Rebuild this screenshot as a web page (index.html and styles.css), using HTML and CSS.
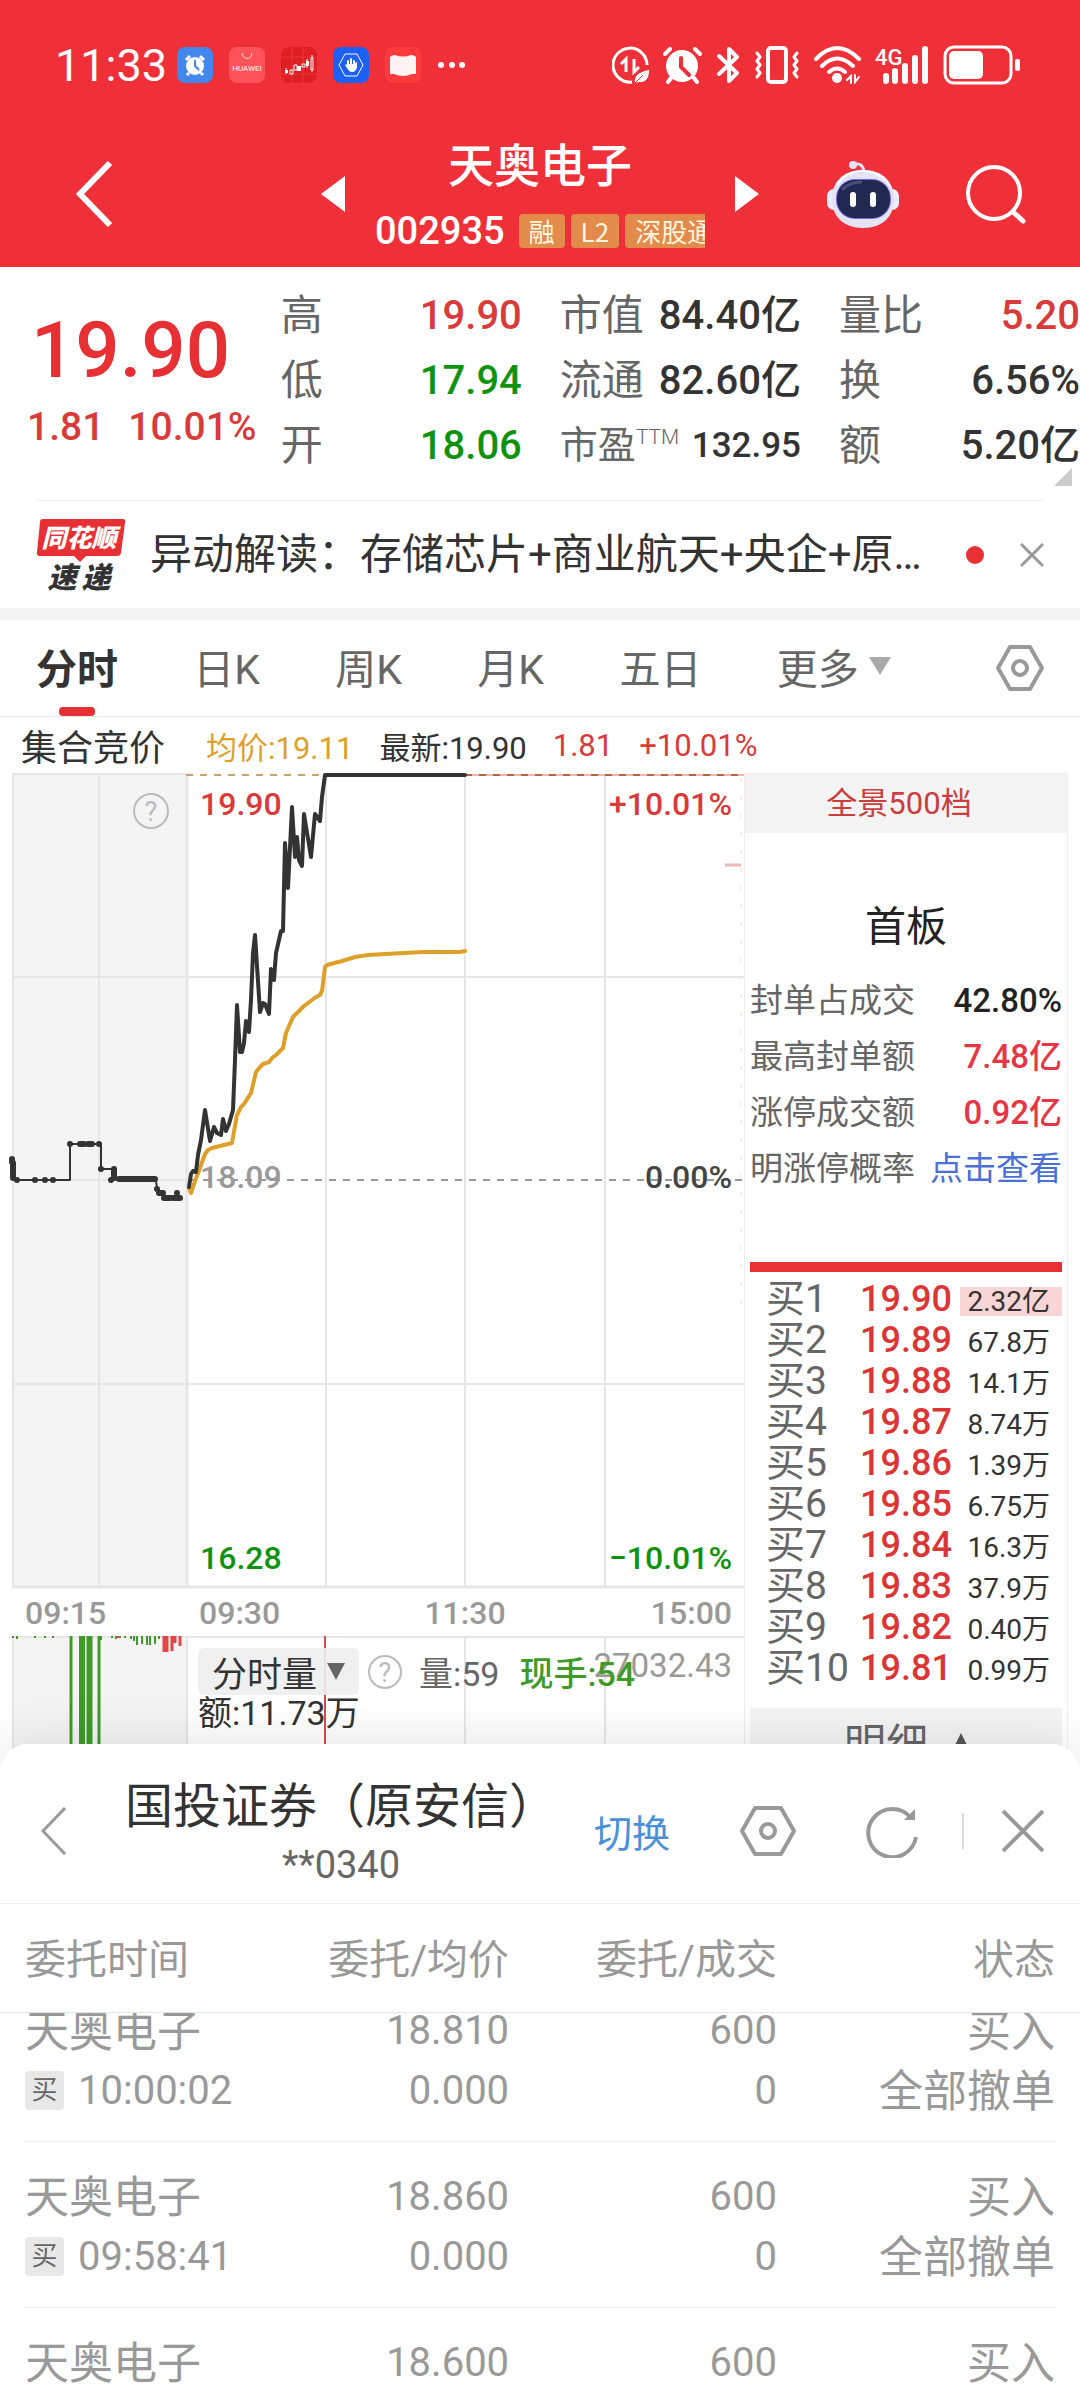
FILE: index.html
```html
<!DOCTYPE html>
<html lang="zh-CN">
<head>
<meta charset="UTF-8">
<meta name="viewport" content="width=device-width">
<title>天奥电子 002935</title>
<link rel="stylesheet" href="styles.css">
</head>
<body>
<header class="top">
    <div class="status">
        <span class="clock">11:33</span>
        <div class="apps">
            <svg width="36" height="36" viewBox="0 0 36 36">
                <rect width="36" height="36" rx="8" fill="#4187ee"/>
                <circle cx="18" cy="19" r="9" fill="#fff"/>
                <path d="M9 13l4-4M27 13l-4-4M12 26l-2 2M24 26l2 2" stroke="#fff" stroke-width="3"/>
                <path d="M18 13v6l4 4" stroke="#4187ee" stroke-width="2" fill="none"/>
            </svg>
            <svg width="36" height="36" viewBox="0 0 36 36">
                <rect width="36" height="36" rx="8" fill="#ff5259"/>
                <path d="M13 6a5 5.500 0 0 0 10 0" stroke="#ffd9da" stroke-width="1" fill="none"/>
                <text x="18" y="24" text-anchor="middle" class="huawei">HUAWEI</text>
            </svg>
            <svg width="36" height="36" viewBox="0 0 36 36">
                <rect width="36" height="36" rx="8" fill="#e01f25"/>
                <path d="M11 0v36M22 0v36M0 10h36M0 27h36" stroke="#e8363b" stroke-width="1"/>
                <path d="M4 23h3v3h-3zM16 19h4v5h-4zM25 14h3v5h-3z" fill="#fff"/>
                <path d="M9 23h3v4h-3zM13 18h3v5h-3zM21 17h3v3h-3zM30 11h2v12h-2zM31 8v3M31 23v2M5 21v6M26 12v9" stroke="#fff" stroke-width="1" fill="none"/>
            </svg>
            <svg width="36" height="36" viewBox="0 0 36 36">
                <rect width="36" height="36" rx="8" fill="#1d60f6"/>
                <path d="M12 7h12l6 11-6 11H12L6 18z" stroke="#fff" stroke-width="1" fill="none"/>
                <path d="M15 19v-5M18 19v-7M21 19v-5" stroke="#fff" stroke-width="2" stroke-linecap="round"/>
                <path d="M14 17h8l1-2h1v5q-1 5-5 5-3 0-5-4l-2-3 1-1 2 2z" fill="#fff"/>
            </svg>
            <svg width="36" height="36" viewBox="0 0 36 36">
                <rect width="36" height="36" rx="8" fill="#ff3a3c"/>
                <path d="M5 10q2-2 5-2 8 3 16 0 3 0 5 2v17h-4q-9 4-18 0H5z" fill="#fff4f1"/>
            </svg>
            <svg width="28" height="8" viewBox="0 0 28 8" fill="#fff"><circle cx="4" cy="4" r="3"/><circle cx="15" cy="4" r="3"/><circle cx="25" cy="4" r="3"/></svg>
        </div>
        <div class="signals">
            <svg width="37" height="38" viewBox="0 0 37 38" fill="none" stroke="#fff">
                <path d="M20 36A17 17 0 1 1 35 19" stroke-width="3"/>
                <path d="M9 18l5-5v13M27 21l-5 5V13" stroke-width="3"/>
                <path d="M23 37q-2-10 14-13 0 13-10 12z" fill="#fff" stroke="none"/>
                <path d="M22 38l9-9" stroke="#f03038" stroke-width="1"/>
            </svg>
            <svg width="39" height="38" viewBox="0 0 39 38" fill="none" stroke="#fff" stroke-linecap="round">
                <circle cx="19" cy="20" r="16" fill="#fff" stroke="none"/>
                <path d="M2 8l5-5M37 8l-5-5M8 32l-3 4M31 32l3 4" stroke-width="4"/>
                <path d="M18 12v9l8 8" stroke="#f03038" stroke-width="4"/>
            </svg>
            <svg width="24" height="38" viewBox="0 0 24 38" fill="none" stroke="#fff" stroke-width="4" stroke-linejoin="round" stroke-linecap="round"><path d="M3 10l18 17-8 8V3l8 8L3 28"/></svg>
            <svg width="46" height="38" viewBox="0 0 46 38" fill="none" stroke="#fff" stroke-width="4" stroke-linejoin="round" stroke-linecap="round">
                <rect x="14" y="2" width="18" height="34" rx="3"/>
                <path stroke-width="3" d="M3 7l3 4-3 4 3 4-3 4 3 4-3 4M43 7l-3 4 3 4-3 4 3 4-3 4 3 4"/>
            </svg>
            <svg width="47" height="38" viewBox="0 0 47 38" fill="none" stroke="#fff" stroke-width="4" stroke-linecap="round">
                <path d="M2 13q21-22 43 0M8 20q15-15 31 0M15 26q8-7 16 0"/>
                <circle cx="23" cy="32" r="5" fill="#fff" stroke="none"/>
                <path d="M33 34l4-4v7M45 31l-4 5v-7" stroke-width="2"/>
            </svg>
            <svg width="54" height="38" viewBox="0 0 54 38" stroke="#fff" stroke-width="6" stroke-linecap="round">
                <path d="M11 30v5M20 25v10M30 20v15M40 12v23M50 3v32"/>
                <text x="0" y="19" class="net" stroke="none">4G</text>
            </svg>
            <svg width="78" height="40" viewBox="0 0 78 40">
                <rect x="2" y="2" width="66" height="36" rx="9" fill="none" stroke="#fff" stroke-width="3"/>
                <rect x="6" y="6" width="34" height="28" rx="5" fill="#fff"/>
                <rect x="72" y="14" width="5" height="12" rx="2" fill="#fff"/>
            </svg>
        </div>
    </div>
    <nav class="nav">
        <div class="nav-left">
            <button class="icon" aria-label="返回"><svg width="37" height="66" viewBox="0 0 37 66"><path d="M34 2L4 33l30 31" fill="none" stroke="#fff" stroke-width="6"/></svg></button>
            <button class="icon" aria-label="上一只"><svg width="24" height="38" viewBox="0 0 24 38"><path d="M24 1v36L0 19z" fill="#fff"/></svg></button>
        </div>
        <div class="nav-title">
            <h1>天奥电子</h1>
            <p><span class="code">002935</span><span class="tag">融</span><span class="tag">L2</span><span class="tag">深股通</span></p>
        </div>
        <div class="nav-right">
            <button class="icon" aria-label="下一只"><svg width="24" height="38" viewBox="0 0 24 38"><path d="M0 1v36l24-18z" fill="#fff"/></svg></button>
            <button class="icon" aria-label="智能助手">
                <svg width="72" height="68" viewBox="0 0 72 68">
                    <path d="M26 4q10-2 11 8" fill="none" stroke="#e3e1fa" stroke-width="3"/>
                    <circle cx="26" cy="5" r="4" fill="#e6e2f8"/>
                    <rect x="0" y="29" width="72" height="21" rx="7" fill="#e9edff"/>
                    <path d="M36 10c20 0 31 12 31 29S56 68 36 68 5 56 5 39s11-29 31-29z" fill="#e4e4f7"/>
                    <path d="M10 25q9-14 26-14t26 14" fill="none" stroke="#fff" stroke-width="2"/>
                    <rect x="9" y="19" width="55" height="40" rx="19" fill="#7a62e6"/>
                    <rect x="10" y="20" width="53" height="38" rx="18" fill="#202950"/>
                    <path d="M16 29q7-7 18-7" fill="none" stroke="#47517a" stroke-width="3" stroke-linecap="round"/>
                    <rect x="23" y="32" width="6" height="15" rx="3" fill="#fff"/>
                    <rect x="43" y="32" width="6" height="15" rx="3" fill="#fff"/>
                </svg>
            </button>
            <button class="icon" aria-label="搜索"><svg width="60" height="60" viewBox="0 0 60 60" fill="none" stroke="#fff" stroke-width="4"><circle cx="28" cy="29" r="26"/><path d="M47 48l10 9" stroke-width="5" stroke-linecap="round"/></svg></button>
        </div>
    </nav>
</header>

<main class="main">
    <section class="quote">
        <div class="price">
            <strong>19.90</strong>
            <p><span>1.81</span><span>10.01%</span></p>
        </div>
        <dl class="stats">
            <div><dt>高</dt><dd class="up">19.90</dd></div>
            <div><dt>市值</dt><dd>84.40亿</dd></div>
            <div><dt>量比</dt><dd class="up">5.20</dd></div>
            <div><dt>低</dt><dd class="down">17.94</dd></div>
            <div><dt>流通</dt><dd>82.60亿</dd></div>
            <div><dt>换</dt><dd>6.56%</dd></div>
            <div><dt>开</dt><dd class="down">18.06</dd></div>
            <div class="small"><dt>市盈<sup>TTM</sup></dt><dd>132.95</dd></div>
            <div><dt>额</dt><dd>5.20亿</dd></div>
        </dl>
        <i class="corner"></i>
    </section>

    <section class="news">
        <svg width="90" height="76" viewBox="0 0 90 76">
            <path d="M7 2h80q3 0 2 4l-4 30q-1 3-4 3H50l-6 6-6-6H4q-4 0-3-4L4 5q0-3 3-3z" fill="#e63033"/>
            <text x="43" y="30" text-anchor="middle" class="logo-a">同花顺</text>
            <text x="26" y="71" text-anchor="middle" class="logo-b">速</text>
            <text x="60" y="71" text-anchor="middle" class="logo-b">递</text>
        </svg>
        <a href="#">异动解读：存储芯片+商业航天+央企+原材料国产替代</a>
        <i class="dot"></i>
        <button class="icon" aria-label="关闭"><svg width="24" height="24" viewBox="0 0 24 24"><path d="M1 1l22 22M23 1L1 23" stroke="#999" stroke-width="3"/></svg></button>
    </section>

    <div class="tabs">
        <button class="active">分时</button>
        <button>日K</button>
        <button>周K</button>
        <button>月K</button>
        <button>五日</button>
        <button>更多<svg width="22" height="18" viewBox="0 0 22 18"><path d="M0 0h22L11 18z" fill="#aaa"/></svg></button>
        <button class="icon set" aria-label="设置"><svg width="48" height="48" viewBox="0 0 48 48" fill="none" stroke="#999" stroke-width="4" stroke-linejoin="round"><path d="M14 3h20l12 21-12 21H14L2 24z"/><circle cx="24" cy="24" r="7"/></svg></button>
    </div>

    <p class="ticker">
        <span class="auction">集合竞价</span>
        <span class="avg">均价:19.11</span>
        <span>最新:19.90</span>
        <span class="up">1.81</span>
        <span class="up">+10.01%</span>
    </p>

    <div class="board">
        <div class="chart">
            <svg class="line" viewBox="0 773 744 863">
                <rect x="12" y="774" width="175" height="813" fill="#f4f4f4"/>
                <path class="grid" d="M13 774v813M99 774v813M187 774v813M326 774v813M465 774v813M605 774v813M12 977h732M12 1180h177M12 1384h732M12 1587h732M12 774h176"/>
                <path class="grid thick" d="M187 774v813M12 1587h732"/>
                <path d="M186 775h139" class="dash tan"/>
                <path d="M465 775h279" stroke="#f0b4ae" stroke-width="2"/>
                <path d="M465 775h279" class="dash rust"/>
                <path d="M189 1180h555" class="dash zero"/>
                <path d="M741 778v535" class="faint"/>
                <path d="M725 865h16" stroke="#f0b9b9" stroke-width="3"/>
                <circle cx="151" cy="811" r="17" class="ring"/>
                <text x="151" y="821" text-anchor="middle" class="mark">?</text>
                <text x="200" y="815" class="up">19.90</text>
                <text x="732" y="815" class="up" text-anchor="end">+10.01%</text>
                <text x="200" y="1188" class="mute">18.09</text>
                <text x="732" y="1188" class="mid" text-anchor="end">0.00%</text>
                <text x="200" y="1569" class="down">16.28</text>
                <text x="732" y="1569" class="down" text-anchor="end">−10.01%</text>
                <g class="mute">
                    <text x="25" y="1624">09:15</text>
                    <text x="199" y="1624">09:30</text>
                    <text x="465" y="1624" text-anchor="middle">11:30</text>
                    <text x="732" y="1624" text-anchor="end">15:00</text>
                </g>
                <polyline class="p-auction" points="12,1159 13,1178 17,1180 70,1180 70,1144 101,1144 101,1169 114,1169 114,1178 119,1180 156,1180 157,1189 163,1193 163,1198 177,1198 177,1193 180,1198"/>
                <path class="p-dots" d="M12 1159v3M13 1163v15M17 1180h0M35 1180h0M45 1180h0M53 1180h0M70 1144h0M80 1144h4M88 1144h4M99 1144h0M101 1169h0M114 1169v9M111 1180h0M119 1179h36M157 1189h0M159 1193h4M164 1198h6M173 1198h7M177 1193h0"/>
                <polyline class="p-avg" points="189,1188 191,1193 195,1181 200,1168 205,1154 208,1150 212,1148 232,1143 233,1137 237,1115 241,1107 244,1104 251,1093 256,1072 260,1067 263,1064 269,1062 272,1058 276,1055 283,1048 286,1033 293,1017 304,1006 316,997 320,995 322,991 325,967 327,965 342,961 355,957 368,955 385,954 423,952 460,952 465,951"/>
                <polyline class="p-now" points="189,1187 191,1174 193,1171 196,1172 198,1155 201,1140 205,1110 210,1141 214,1127 217,1133 221,1135 223,1119 226,1131 229,1124 233,1110 235,1060 237,1005 240,1052 242,1052 244,1043 246,1021 249,1032 251,1000 253,953 255,935 260,1012 263,1003 265,1004 269,1014 271,969 274,980 276,953 281,931 283,931 285,843 288,888 292,807 295,857 297,837 299,860 302,866 304,814 311,857 315,814 320,821 322,797 325,775 465,775"/>
            </svg>
            <div class="volume">
                <svg class="bars" viewBox="0 1636 744 136">
                    <rect x="12" y="1636" width="175" height="136" fill="#f4f4f4"/>
                    <path class="grid" d="M13 1636v136M187 1636v136M465 1636v136M605 1636v136M12 1637h732"/>
                    <path d="M325 1636v136" stroke="#d84a4a" stroke-width="2"/>
                    <g fill="none" stroke="#3f9a28">
                        <path d="M71 1636v136M99 1636v136M88 1636v136M91 1636v136" stroke-width="3"/>
                        <path d="M82 1636v136" stroke-width="6"/>
                        <path d="M13 1636v2M17 1636v3M35 1636v2M45 1636v2M53 1636v2M101 1636v4M112 1636v2M116 1636v3M120 1636v2M125 1636v2M131 1636v3M134 1636v5M137 1636v9M142 1636v8M147 1636v9M150 1636v9M155 1636v8M159 1636v3" stroke-width="2"/>
                    </g>
                    <path d="M118 1636v2M164 1636v16M167 1636v16M172 1636v15M175 1636v7M180 1636v10" stroke="#e04848" stroke-width="3"/>
                </svg>
                <span class="scale">27032.43</span>
                <div class="vol-row">
                    <button class="pick">分时量<svg width="18" height="17" viewBox="0 0 18 17"><path d="M0 0h18L9 17z" fill="#666"/></svg></button>
                    <svg width="36" height="36" viewBox="0 0 36 36"><circle cx="18" cy="18" r="16" class="ring"/><text x="18" y="28" text-anchor="middle" class="mark">?</text></svg>
                    <span class="vol">量:59</span>
                    <span class="hand">现手:54</span>
                </div>
                <p class="amount">额:11.73万</p>
            </div>
        </div>

        <aside class="panel">
            <a class="depth" href="#">全景500档</a>
            <h2>首板</h2>
            <dl class="seal">
                <div><dt>封单占成交</dt><dd>42.80%</dd></div>
                <div><dt>最高封单额</dt><dd class="hot">7.48亿</dd></div>
                <div><dt>涨停成交额</dt><dd class="hot">0.92亿</dd></div>
                <div><dt>明涨停概率</dt><dd><a href="#">点击查看</a></dd></div>
            </dl>
            <table class="bids">
                <tr><th>买1</th><td>19.90</td><td><span class="flash">2.32亿</span></td></tr>
                <tr><th>买2</th><td>19.89</td><td>67.8万</td></tr>
                <tr><th>买3</th><td>19.88</td><td>14.1万</td></tr>
                <tr><th>买4</th><td>19.87</td><td>8.74万</td></tr>
                <tr><th>买5</th><td>19.86</td><td>1.39万</td></tr>
                <tr><th>买6</th><td>19.85</td><td>6.75万</td></tr>
                <tr><th>买7</th><td>19.84</td><td>16.3万</td></tr>
                <tr><th>买8</th><td>19.83</td><td>37.9万</td></tr>
                <tr><th>买9</th><td>19.82</td><td>0.40万</td></tr>
                <tr><th>买10</th><td>19.81</td><td>0.99万</td></tr>
            </table>
            <button class="detail">明细<svg width="14" height="14" viewBox="0 0 14 14"><path d="M0 14h14L7 0z" fill="#555"/></svg></button>
        </aside>
    </div>
</main>

<section class="sheet">
    <div class="broker">
        <button class="icon" aria-label="返回"><svg width="26" height="48" viewBox="0 0 26 48"><path d="M24 1L2 24l22 23" fill="none" stroke="#999" stroke-width="3"/></svg></button>
        <div class="account">
            <h2>国投证券（原安信）</h2>
            <p>**0340</p>
        </div>
        <button class="switch">切换</button>
        <div class="tools">
            <button class="icon" aria-label="设置"><svg width="56" height="52" viewBox="0 0 56 52" fill="none" stroke="#999" stroke-width="4" stroke-linejoin="round"><path d="M15 3h26l13 23-13 23H15L2 26z"/><circle cx="28" cy="26" r="7"/></svg></button>
            <button class="icon refresh" aria-label="刷新"><svg width="52" height="54" viewBox="0 0 52 54" fill="none" stroke="#999" stroke-width="4"><path d="M50 33a24 24 0 1 1-5-19"/><path d="M49 5v11H38z" fill="#999" stroke="none"/></svg></button>
            <i class="bar"></i>
            <button class="icon" aria-label="关闭"><svg width="42" height="42" viewBox="0 0 42 42"><path d="M1 1l40 40M41 1L1 41" stroke="#999" stroke-width="4"/></svg></button>
        </div>
    </div>
    <table class="orders head">
        <tr><th>委托时间</th><th>委托/均价</th><th>委托/成交</th><th>状态</th></tr>
    </table>
    <div class="list">
        <table class="orders">
            <tr>
                <td><p class="cn">天奥电子</p><p><span class="side">买</span>10:00:02</p></td>
                <td><p>18.810</p><p>0.000</p></td>
                <td><p>600</p><p>0</p></td>
                <td><p class="cn">买入</p><p class="cn">全部撤单</p></td>
            </tr>
            <tr>
                <td><p class="cn">天奥电子</p><p><span class="side">买</span>09:58:41</p></td>
                <td><p>18.860</p><p>0.000</p></td>
                <td><p>600</p><p>0</p></td>
                <td><p class="cn">买入</p><p class="cn">全部撤单</p></td>
            </tr>
            <tr>
                <td><p class="cn">天奥电子</p></td>
                <td><p>18.600</p></td>
                <td><p>600</p></td>
                <td><p class="cn">买入</p></td>
            </tr>
        </table>
    </div>
</section>
</body>
</html>
```
FILE: styles.css
```css
* {
    margin: 0;
    padding: 0;
    box-sizing: border-box;
}
body {
    display: flex;
    flex-direction: column;
    height: 100vh;
    overflow: hidden;
    background: #fff;
    color: #333;
    font-family: Roboto, "Noto Sans CJK SC", sans-serif;
    font-size: 32px;
}
button {
    border: 0;
    background: none;
    color: inherit;
    font: inherit;
}
a {
    color: inherit;
    text-decoration: none;
}
svg {
    display: block;
    flex: none;
}
.icon {
    display: block;
    flex: none;
}
.up {
    color: #d93a3a;
    fill: #d93a3a;
}
.down {
    color: #0f930f;
    fill: #0f930f;
}

/* header */
.top {
    flex: none;
    background: #f03038;
    color: #fff;
}
.status {
    display: flex;
    align-items: center;
    height: 130px;
    padding: 0 59px 0 55px;
}
.clock {
    font-size: 45px;
}
.apps {
    display: flex;
    align-items: center;
    gap: 16px;
    margin-left: 10px;
}
.signals {
    display: flex;
    align-items: center;
    gap: 14px;
    margin-left: auto;
}
.huawei {
    font-size: 8px;
    fill: #fff;
}
.net {
    font-size: 22px;
    font-weight: 500;
    fill: #fff;
}
.nav {
    display: grid;
    grid-template-columns: 1fr 330px 1fr;
    column-gap: 30px;
    height: 137px;
}
.nav-left,
.nav-right {
    display: flex;
    align-items: center;
    justify-content: space-between;
    padding-bottom: 10px;
}
.nav-left {
    padding-left: 76px;
}
.nav-right {
    padding-right: 54px;
}
.nav-title {
    padding-top: 8px;
    overflow: hidden;
}
.nav-title h1 {
    font-size: 46px;
    font-weight: 500;
    line-height: 56px;
    text-align: center;
}
.nav-title p {
    display: flex;
    align-items: center;
    gap: 6px;
    margin-top: 18px;
    white-space: nowrap;
}
.code {
    margin-right: 8px;
    font-size: 38px;
    font-weight: 500;
    line-height: 38px;
}
.tag {
    padding: 0 10px;
    border-radius: 4px;
    background: #e38b4b;
    color: #fff6e0;
    font-family: "Noto Sans CJK SC", sans-serif;
    font-size: 26px;
    line-height: 34px;
}

/* quote */
.main {
    flex: 1;
    min-height: 0;
    overflow: hidden;
}
.quote {
    position: relative;
    display: flex;
    height: 233px;
}
.price {
    width: 26%;
    padding: 42px 0 0 27px;
    color: #e63033;
    white-space: nowrap;
}
.price strong {
    display: block;
    padding-left: 4px;
    font-size: 78px;
    font-weight: 500;
    line-height: 84px;
}
.price p {
    display: flex;
    gap: 24px;
    margin-top: 10px;
    font-size: 39px;
    font-weight: 500;
    line-height: 48px;
    color: #d93a3a;
}
.stats {
    display: grid;
    flex: 1;
    grid-template-columns: repeat(3, 1fr);
    grid-auto-rows: 65px;
    column-gap: 38px;
    padding-top: 16px;
}
.stats div {
    display: flex;
    justify-content: space-between;
    line-height: 65px;
    white-space: nowrap;
}
.stats dt {
    font-size: 42px;
    color: #666;
}
.stats dd {
    font-size: 40px;
    font-weight: 500;
}
.stats .small dt {
    font-size: 38px;
}
.stats .small dd {
    font-size: 35px;
}
.stats sup {
    font-size: 21px;
    font-weight: 300;
    line-height: 0;
}
.corner {
    position: absolute;
    right: 8px;
    bottom: 14px;
    border: 9px solid transparent;
    border-right-color: #ccc;
    border-bottom-color: #ccc;
}

/* news */
.news {
    display: flex;
    align-items: center;
    height: 108px;
    margin: 0 36px;
    border-top: 1px solid #eee;
}
.news a {
    flex: 1;
    margin: 0 34px 0 24px;
    overflow: hidden;
    font-size: 42px;
    line-height: 60px;
    text-overflow: ellipsis;
    white-space: nowrap;
}
.dot {
    width: 18px;
    height: 18px;
    margin-right: 36px;
    border-radius: 50%;
    background: #e63033;
}

/* period tabs */
.tabs {
    display: flex;
    align-items: center;
    justify-content: space-between;
    height: 109px;
    padding: 0 36px;
    border-top: 12px solid #f4f4f4;
    border-bottom: 1px solid #e6e6e6;
    color: #666;
}
.tabs button {
    display: flex;
    align-items: center;
    gap: 10px;
    height: 96px;
    padding-bottom: 4px;
    font-size: 41px;
}
.tabs .active {
    position: relative;
    color: #333;
    font-weight: 700;
}
.tabs .active::after {
    content: "";
    position: absolute;
    bottom: 0;
    left: 50%;
    width: 36px;
    height: 9px;
    margin-left: -18px;
    border-radius: 4px;
    background: #e63033;
}
.tabs .set {
    margin-left: 30px;
    padding-bottom: 0;
}
.ticker {
    display: flex;
    align-items: center;
    gap: 26px;
    height: 56px;
    padding-left: 21px;
    font-size: 31px;
}
.auction {
    margin-right: 15px;
    font-size: 36px;
}
.avg {
    color: #dfa02a;
}

/* chart */
.board {
    display: flex;
    align-items: flex-start;
    padding-right: 12px;
}
.chart {
    flex: 1;
    min-width: 0;
}
.line {
    width: 100%;
    font-size: 32px;
    font-weight: 500;
}
.grid {
    fill: none;
    stroke: #e6e6e6;
    stroke-width: 2;
}
.thick {
    stroke-width: 3;
}
.dash {
    stroke-width: 2;
    stroke-dasharray: 7 7;
}
.tan {
    stroke: #c8a370;
}
.rust {
    stroke: #b8683c;
}
.zero {
    stroke: #999;
}
.faint {
    stroke: #f6dcdc;
    stroke-width: 1;
    stroke-dasharray: 4 14;
}
.ring {
    fill: none;
    stroke: #bbb;
    stroke-width: 2;
}
.mark {
    font-size: 27px;
    font-weight: 400;
    fill: #bbb;
}
.mute {
    fill: #999;
}
.mid {
    fill: #444;
}
.p-auction,
.p-now,
.p-avg,
.p-dots {
    fill: none;
    stroke: #333;
    stroke-width: 4;
    stroke-linejoin: round;
    stroke-linecap: round;
}
.p-auction {
    stroke-width: 2;
}
.p-dots {
    stroke-width: 6;
}
.p-avg {
    stroke: #dfa02a;
    stroke-width: 4;
}
.volume {
    position: relative;
    height: 136px;
    padding: 12px 0 0 198px;
    font-size: 34px;
}
.bars {
    position: absolute;
    top: 0;
    left: 0;
    width: 100%;
}
.scale {
    position: absolute;
    top: 10px;
    right: 12px;
    color: #999;
    font-size: 33px;
    line-height: 40px;
}
.vol-row {
    position: relative;
    display: flex;
    align-items: center;
    height: 47px;
}
.pick {
    display: flex;
    align-items: center;
    gap: 10px;
    height: 47px;
    margin-right: 8px;
    padding: 0 14px;
    border-radius: 6px;
    background: rgba(238, 238, 238, .9);
    font-size: 35px;
}
.vol {
    margin-left: 16px;
    color: #666;
}
.hand {
    margin-left: 20px;
    color: #3f9a28;
    font-weight: 500;
}
.amount {
    position: relative;
    line-height: 36px;
}

/* order book */
.panel {
    width: 324px;
    height: 999px;
    padding: 0 5px;
    border: 1px solid #eee;
    border-bottom: 0;
}
.depth {
    display: block;
    margin: 0 -5px;
    padding-right: 14px;
    background: #f4f4f4;
    color: #cc3d3d;
    font-size: 31px;
    line-height: 59px;
    text-align: center;
}
.panel h2 {
    margin: 64px 0 16px;
    font-size: 41px;
    font-weight: 400;
    line-height: 60px;
    text-align: center;
    color: #222;
}
.seal div {
    display: flex;
    justify-content: space-between;
    font-size: 33px;
    line-height: 56px;
    white-space: nowrap;
}
.seal dt {
    color: #666;
}
.seal dd {
    color: #222;
    font-weight: 500;
}
.seal .hot {
    color: #e63545;
}
.seal a {
    font-size: 33px;
    color: #4a70d6;
    font-weight: 400;
}
.bids {
    width: 100%;
    margin-top: 65px;
    border-top: 10px solid #e63033;
    border-collapse: separate;
    border-spacing: 0;
    padding-top: 6px;
}
.bids tr {
    height: 41px;
}
.bids th {
    width: 110px;
    padding-left: 16px;
    color: #666;
    font-size: 39px;
    font-weight: 400;
    line-height: 36px;
    text-align: left;
    vertical-align: middle;
    white-space: nowrap;
}
.bids td {
    color: #dc3535;
    font-size: 36px;
    font-weight: 500;
    line-height: 36px;
    vertical-align: middle;
}
.bids td + td {
    padding: 6px 12px 0 0;
    color: #333;
    font-size: 28px;
    font-weight: 400;
    line-height: 29px;
    text-align: right;
}
.flash {
    display: block;
    margin-right: -12px;
    padding-right: 12px;
    background: #f9d5d5;
}
.detail {
    display: flex;
    align-items: center;
    justify-content: center;
    gap: 26px;
    width: 100%;
    height: 64px;
    margin-top: 20px;
    background: #f4f4f4;
    color: #666;
    font-size: 42px;
}

/* trade sheet */
.sheet {
    position: relative;
    flex: none;
    margin-top: -28px;
    border-radius: 28px 28px 0 0;
    background: #fff;
    box-shadow: 0 -8px 48px rgba(0, 0, 0, .09);
}
.broker {
    display: flex;
    align-items: center;
    height: 160px;
    padding: 14px 36px 0 41px;
    border-bottom: 1px solid #eee;
}
.account {
    margin: 0 auto 0 58px;
    padding-top: 4px;
    text-align: center;
}
.account h2 {
    font-size: 48px;
    font-weight: 400;
    line-height: 64px;
}
.account p {
    color: #666;
    font-size: 38px;
    line-height: 52px;
}
.switch {
    color: #4a8fdb;
    font-size: 38px;
}
.tools {
    display: flex;
    align-items: center;
    gap: 38px;
    margin-left: 70px;
}
.refresh {
    margin: 0 6px 0 32px;
}
.bar {
    width: 2px;
    height: 36px;
    background: #ddd;
}
.orders {
    width: 100%;
    border-collapse: collapse;
    table-layout: fixed;
    color: #999;
    font-size: 40px;
    text-align: right;
}
.orders th,
.orders td {
    width: 26%;
    padding: 0;
    font-weight: 400;
}
.orders th:first-child,
.orders td:first-child {
    width: 21%;
    text-align: left;
}
.orders th:last-child,
.orders td:last-child {
    width: 27%;
}
.head {
    display: block;
    padding: 0 25px;
    border-bottom: 1px solid #e6e6e6;
}
.head tbody {
    display: table;
    width: 100%;
    table-layout: fixed;
}
.head th {
    height: 108px;
    padding-bottom: 4px;
    font-size: 41px;
}
.list {
    height: 375px;
    padding: 0 25px;
    overflow: hidden;
}
/* the list is scrolled part way into its first row */
.list .orders {
    margin-top: -37px;
}
.list td {
    padding: 24px 0 21px;
    border-bottom: 1px solid #eee;
    vertical-align: top;
}
.list p {
    display: flex;
    align-items: center;
    justify-content: flex-end;
    height: 60px;
    white-space: nowrap;
}
.list td:first-child p {
    justify-content: flex-start;
}
.list .cn {
    padding-bottom: 5px;
    font-size: 44px;
}
.side {
    width: 39px;
    margin-right: 14px;
    border-radius: 4px;
    background: #e8e8e8;
    color: #666;
    font-size: 26px;
    line-height: 39px;
    text-align: center;
}
.logo-a {
    fill: #fff;
    font-size: 25px;
    font-style: italic;
    font-weight: 900;
}
.logo-b {
    fill: #333;
    font-size: 29px;
    font-style: italic;
    font-weight: 900;
}
```
